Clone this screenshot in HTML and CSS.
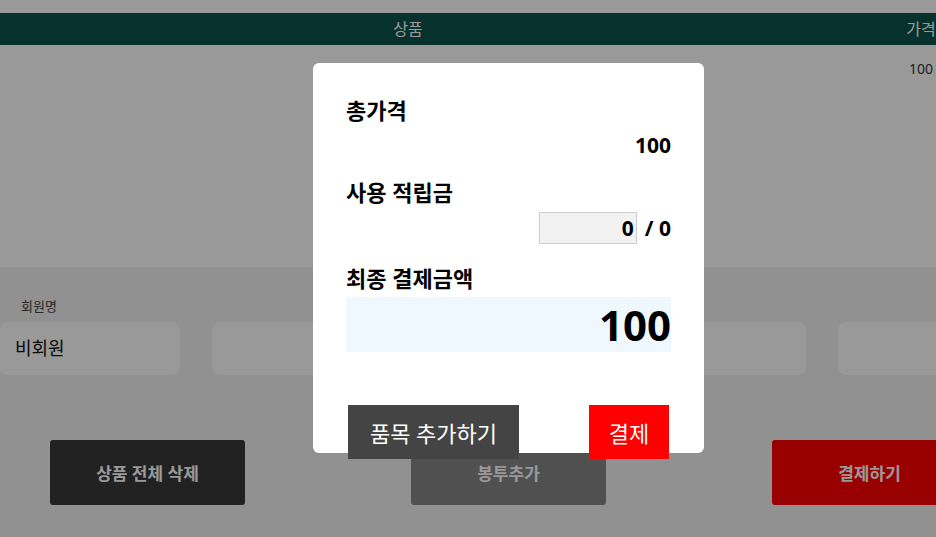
FILE: index.html
```html
<!DOCTYPE html>
<html lang="ko">
<head>
    <meta charset="UTF-8">
    <meta name="viewport" content="width=device-width, initial-scale=1.0">
    <title>결제</title>
    <link rel="stylesheet" href="styles.css">
</head>
<body>
    <div class="page">
        <div class="cart">
            <div class="cart-head">
                <div class="col-name">상품</div>
                <div class="col-price">가격</div>
            </div>
            <div class="cart-row">
                <div class="col-name"></div>
                <div class="col-price">100</div>
            </div>
        </div>

        <div class="checkout">
            <div class="member-label">회원명</div>
            <div class="fields">
                <div class="field">비회원</div>
                <div class="field"></div>
                <div class="field"></div>
                <div class="field"></div>
            </div>
            <div class="actions">
                <button class="btn btn-dark">상품 전체 삭제</button>
                <button class="btn btn-gray">봉투추가</button>
                <button class="btn btn-red">결제하기</button>
            </div>
        </div>

        <!-- payment popup -->
        <div class="overlay">
            <div class="modal">
                <h3 class="modal-label">총가격</h3>
                <div class="modal-value">100</div>

                <h3 class="modal-label label-gap">사용 적립금</h3>
                <div class="point-row">
                    <input class="point-input" type="text" value="0">
                    <span class="point-max">/ 0</span>
                </div>

                <h3 class="modal-label label-gap">최종 결제금액</h3>
                <div class="final-box">100</div>

                <div class="modal-buttons">
                    <button class="modal-btn btn-add">품목 추가하기</button>
                    <button class="modal-btn btn-pay">결제</button>
                </div>
            </div>
        </div>
    </div>
</body>
</html>
```

FILE: styles.css
```css
* {
    margin: 0;
    padding: 0;
    box-sizing: border-box;
}

html, body {
    overflow: hidden;
}

body {
    font-family: 'Noto Sans', 'Noto Sans CJK KR', sans-serif;
    color: #222;
    background: #fff;
}

.page {
    position: relative;
    width: 1017px;
    height: 537px;
    display: flex;
    flex-direction: column;
    padding-top: 13px;
}

/* Cart table */
.cart {
    height: 254px;
}

.cart-head,
.cart-row {
    display: grid;
    grid-template-columns: 816px 210px;
    text-align: center;
}

.cart-head {
    background: #0d524b;
    color: #fff;
    height: 32px;
    line-height: 32px;
    font-size: 16px;
}

.cart-row {
    color: #333;
    padding-top: 14px;
    line-height: 20px;
    font-size: 14px;
}

/* Checkout section */
.checkout {
    flex: 1;
    background: #f2f2f2;
    padding-top: 30px;
}

.member-label {
    font-size: 13px;
    line-height: 18px;
    padding-left: 21px;
    color: #444;
    margin-bottom: 7px;
}

.fields {
    display: grid;
    grid-template-columns: 180px 281px 281px 281px;
    gap: 32px;
}

.field {
    height: 53px;
    background: #fff;
    border-radius: 8px;
    font-size: 18px;
    line-height: 53px;
    padding-left: 15px;
    color: #111;
}

.actions {
    display: flex;
    justify-content: space-between;
    padding: 0 50px;
    margin-top: 65px;
}

.btn {
    width: 195px;
    height: 65px;
    border: none;
    border-radius: 3px;
    color: #fff;
    font-family: inherit;
    font-size: 17px;
    font-weight: 700;
}

.btn-dark { background: #373737; }
.btn-gray { background: #858585; }
.btn-red { background: #ff0000; }

/* Popup */
.overlay {
    position: absolute;
    inset: 0;
    background: rgba(0, 0, 0, 0.4);
    display: flex;
    justify-content: center;
    align-items: flex-start;
    padding-top: 63px;
}

.modal {
    width: 391px;
    height: 390px;
    background: #fff;
    border-radius: 6px;
    padding: 32px 33px;
    color: #000;
}

.modal-label {
    font-size: 22px;
    font-weight: 700;
    line-height: 30px;
}

.label-gap {
    margin-top: 19px;
}

.modal-value {
    margin-top: 7px;
    text-align: right;
    font-size: 21px;
    font-weight: 700;
    line-height: 26px;
}

.point-row {
    margin-top: 5px;
    display: flex;
    justify-content: flex-end;
    align-items: center;
    gap: 8px;
    font-size: 21px;
    font-weight: 700;
}

.point-input {
    width: 98px;
    height: 32px;
    border: 1px solid #ccc;
    background: #f2f2f2;
    text-align: right;
    padding-right: 2px;
    font-family: inherit;
    font-size: 21px;
    font-weight: 700;
    color: #000;
}

.final-box {
    margin-top: 4px;
    height: 55px;
    background: #eff7ff;
    text-align: right;
    font-size: 42px;
    font-weight: 700;
    line-height: 55px;
}

.modal-buttons {
    display: flex;
    justify-content: space-between;
    margin-top: 53px;
    padding: 0 2px;
}

.modal-btn {
    height: 54px;
    border: none;
    color: #fff;
    font-family: inherit;
    font-size: 22px;
}

.btn-add {
    width: 171px;
    background: #444;
}

.btn-pay {
    width: 80px;
    background: #ff0000;
}
```
